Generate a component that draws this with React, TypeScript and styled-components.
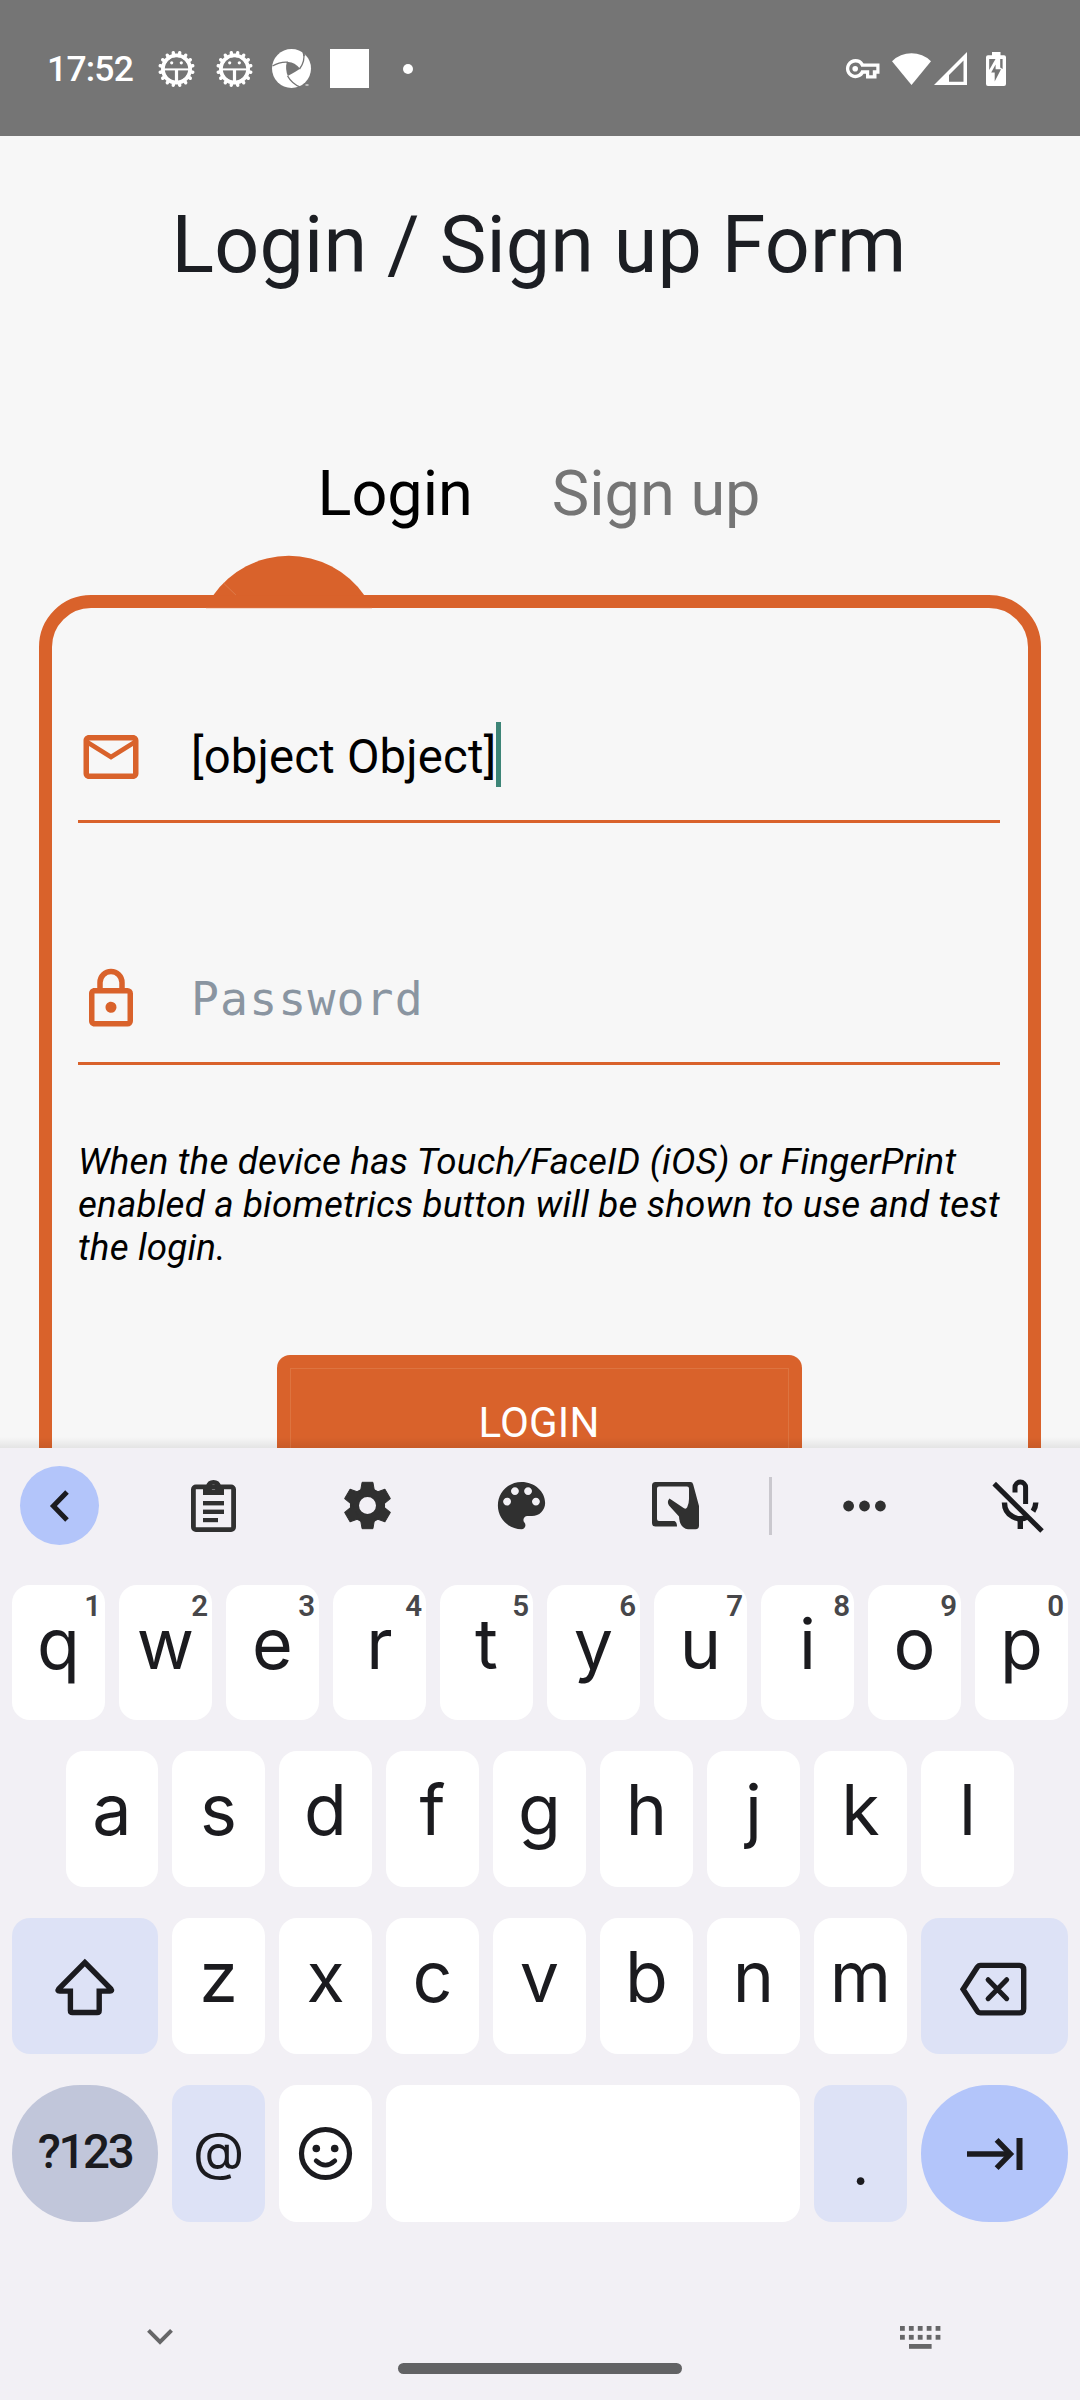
import React from 'react';
import styled, { createGlobalStyle } from 'styled-components';

const ORANGE = '#d9622b';
const INK = '#1b1b1f';

const GlobalStyle = createGlobalStyle`
  * { box-sizing: border-box; }
  body { margin: 0; background: #f7f7f7; font-family: Roboto, sans-serif; }
  button { border: 0; padding: 0; font: inherit; background: none; }
  svg { display: block; flex: none; overflow: visible; }
`;

const Screen = styled.div`
  width: 1080px;
  height: 2400px;
  display: flex;
  flex-direction: column;
  overflow: hidden;
  background: #f7f7f7;
`;

/* ---------- status bar ---------- */

const StatusBar = styled.header`
  height: 136px;
  flex: none;
  display: flex;
  align-items: center;
  justify-content: space-between;
  padding: 1px 74px 0 47px;
  background: #757575;
  color: #fff;
`;

const StatusGroup = styled.div`
  display: flex;
  align-items: center;
`;

const Clock = styled.span`
  width: 111px;
  font: 500 35.5px/40px Roboto, sans-serif;
  letter-spacing: -0.8px;
  white-space: nowrap;
`;

const StatusIcon = styled.svg<{ $gap?: number }>`
  margin-left: ${(p) => p.$gap ?? 0}px;
`;

const AppSquare = styled.div`
  width: 39px;
  height: 39px;
  margin-left: 19px;
  background: #fff;
`;

const MoreDot = styled.div`
  width: 10px;
  height: 10px;
  margin-left: 34px;
  border-radius: 50%;
  background: #fff;
`;

/* ---------- form page ---------- */

const Page = styled.main`
  position: relative;
  height: 1312px;
  flex: none;
  overflow: hidden;
`;

const Title = styled.h1`
  margin: 0 2px 0 0;
  height: 218px;
  line-height: 218px;
  font-size: 79px;
  font-weight: 400;
  letter-spacing: 0.15px;
  text-align: center;
  color: #1c1e23;
`;

const Tabs = styled.nav`
  display: flex;
  justify-content: center;
  gap: 79px;
  height: 80px;
  padding-right: 2px;
  margin-top: 100px;
  margin-bottom: 22px;
`;

const Tab = styled.button<{ $active?: boolean }>`
  font-size: 63px;
  line-height: 80px;
  color: ${(p) => (p.$active ? '#000' : '#757575')};
`;

const Marker = styled.svg`
  margin-left: 197px;
`;

const Card = styled.section`
  width: 1002px;
  height: 1000px;
  margin: 0 auto;
  padding: 86px 28px 0 26px;
  border: 13px solid ${ORANGE};
  border-radius: 52px;
`;

const Field = styled.div`
  display: flex;
  align-items: center;
  height: 129px;
  margin-bottom: 113px;
  border-bottom: 3px solid ${ORANGE};
`;

const FieldValue = styled.span`
  margin-left: 47px;
  font-size: 47.25px;
  line-height: 56px;
  letter-spacing: 0.2px;
  color: #000;
`;

const Placeholder = styled(FieldValue)`
  font-family: 'DejaVu Sans Mono', monospace;
  font-size: 46.5px;
  letter-spacing: 1.1px;
  color: #8a95a1;
`;

const Caret = styled.span`
  width: 5px;
  height: 65px;
  margin: 0 0 5px 0;
  background: #3d8577;
`;

const Note = styled.p`
  margin: -38px -10px 86px 0;
  font-size: 36.75px;
  line-height: 43px;
  letter-spacing: 0.18px;
  font-style: italic;
  color: #000;
`;

const LoginButton = styled.button`
  display: block;
  width: 525px;
  height: 134px;
  margin: 0 auto;
  padding: 13px;
  border-radius: 13px;
  background: ${ORANGE};
`;

const LoginLabel = styled.span`
  display: block;
  height: 108px;
  border: 1px solid #dd7440;
  font-size: 42px;
  line-height: 108px;
  letter-spacing: 0.2px;
  text-align: center;
  color: #fff;
`;

const PageShade = styled.div`
  position: absolute;
  left: 0;
  right: 0;
  bottom: 0;
  height: 11px;
  background: linear-gradient(rgba(0, 0, 0, 0), rgba(0, 0, 0, 0.08));
`;

/* ---------- keyboard ---------- */

const Keyboard = styled.section`
  flex: 1;
  display: flex;
  flex-direction: column;
  background: #f2f0f5;
`;

const Toolbar = styled.div`
  display: flex;
  align-items: center;
  height: 115px;
  padding-left: 20px;
`;

const BackCircle = styled.button`
  width: 79px;
  height: 79px;
  display: grid;
  place-items: center;
  border-radius: 50%;
  background: #b3c5fa;
`;

const ToolSlot = styled.div<{ $width: number }>`
  width: ${(p) => p.$width}px;
  display: flex;
  justify-content: center;
`;

const ToolDivider = styled.div`
  width: 3px;
  height: 58px;
  background: #cac8ce;
`;

const KeyRows = styled.div`
  display: flex;
  flex-direction: column;
  gap: 31px;
  margin-top: 22px;
`;

const KeyRow = styled.div<{ $height: number; $inset?: number }>`
  display: flex;
  gap: 14px;
  height: ${(p) => p.$height}px;
  padding: 0 ${(p) => p.$inset ?? 12}px;
`;

const tones = { plain: '#fff', soft: '#dde2f6', strong: '#b3c5fa', mute: '#c1c6da' };

const Key = styled.button<{ $tone?: keyof typeof tones; $width?: number; $round?: boolean }>`
  position: relative;
  display: flex;
  align-items: center;
  justify-content: center;
  width: ${(p) => p.$width ?? 93}px;
  height: 100%;
  flex: none;
  border-radius: ${(p) => (p.$round ? 68 : 18)}px;
  background: ${(p) => tones[p.$tone ?? 'plain']};
  color: ${INK};
`;

const Letter = styled.span`
  align-self: flex-start;
  font: 400 70px/117px Inter, sans-serif;
`;

const Hint = styled.span`
  position: absolute;
  top: 5px;
  right: 4px;
  font: 600 29.5px/32px Roboto, sans-serif;
  color: #47474a;
`;

const SymbolsLabel = styled.span`
  font: 500 47.5px/60px Roboto, sans-serif;
  letter-spacing: -2.4px;
  margin-top: -4px;
`;

const AtLabel = styled.span`
  font: 400 53px/60px Inter, sans-serif;
  margin-top: -5px;
`;

const PeriodLabel = styled.span`
  font: 400 58px/60px Inter, sans-serif;
  margin-top: 20px;
`;

const NavBar = styled.footer`
  position: relative;
  flex: 1;
  display: flex;
  align-items: center;
  justify-content: space-between;
  padding: 52px 139px 0 147px;
`;

const HomePill = styled.div`
  position: absolute;
  left: 398px;
  bottom: 26px;
  width: 284px;
  height: 11px;
  border-radius: 6px;
  background: #626264;
`;

/* ---------- drawings ---------- */

const teeth = Array.from({ length: 16 }, (_, i) => i * 22.5);

const GearFace = ({ gap }: { gap?: number }) => (
  <StatusIcon $gap={gap} width="37" height="38" viewBox="-18.5 -19 37 38">
    <g stroke="#fff" strokeWidth="3.4" strokeLinecap="round">
      {teeth.map((a) => (
        <line key={a} x1="0" y1="-13.5" x2="0" y2="-16.6" transform={`rotate(${a + 11.25})`} />
      ))}
    </g>
    <circle r="13.6" fill="none" stroke="#fff" strokeWidth="3.8" />
    <path d="M-13 0.4H13" stroke="#fff" strokeWidth="2" />
    <path d="M0 0V14" stroke="#fff" strokeWidth="3.2" />
    <circle cx="-4.8" cy="-6.2" r="1.6" fill="#fff" />
    <circle cx="4.8" cy="-6.2" r="1.6" fill="#fff" />
  </StatusIcon>
);

const Swirl = () => (
  <StatusIcon $gap={19} width="39" height="39" viewBox="0 0 39 39">
    <circle cx="19.5" cy="19.5" r="19.5" fill="#fff" />
    <path d="M14.8 13Q22 12 28 19.7Q22.5 23.5 15.8 27Q13 20 14.8 13Z" fill="#757575" />
    <g fill="none" stroke="#757575" strokeWidth="1.4">
      <path d="M16 13.2Q8 12.5 0.5 17" />
      <path d="M27.5 20Q33.5 12 31.5 3" />
      <path d="M15.6 27Q20 35 29 38.5" />
    </g>
    <path d="M30 2L33.5 6.5L31.5 7Z" fill="#757575" />
    <path d="M26 39L31 37L37 34V39Z" fill="#757575" />
    <path d="M33.5 36H36.5" stroke="#fff" />
  </StatusIcon>
);

const VpnKey = () => (
  <StatusIcon width="34" height="20" viewBox="0 0 34 20">
    <path
      fillRule="evenodd"
      fill="#fff"
      d="M9.5 0A9.6 9.6 0 0 1 17.6 4.4H33.5V14.8H30.5V19.5H20V14.8H17.6A9.6 9.6 0 1 1 9.5 0ZM9.5 3.6A6.1 6.1 0 1 0 15.2 11.3H23.2V16.2H26.8V11.3H30.3V7.8H15.2A6.1 6.1 0 0 0 9.5 3.6Z"
    />
    <circle cx="9.2" cy="9.7" r="2.8" fill="#fff" />
  </StatusIcon>
);

const Wifi = () => (
  <StatusIcon $gap={12} width="39" height="33" viewBox="0 0 39 33">
    <path d="M0 9.2A28 28 0 0 1 39 9.2L19.5 33Z" fill="#fff" />
  </StatusIcon>
);

const Signal = () => (
  <StatusIcon $gap={3} width="33" height="33" viewBox="0 0 33 33">
    <path fillRule="evenodd" fill="#fff" d="M33 0V33H0ZM29.5 8.5L15 23V29.8H29.5Z" />
  </StatusIcon>
);

const Battery = () => (
  <StatusIcon $gap={19} width="20" height="34" viewBox="0 0 20 34">
    <path d="M6 0H14.5V3.2H18A2 2 0 0 1 20 5.2V32A2 2 0 0 1 18 34H2A2 2 0 0 1 0 32V5.2A2 2 0 0 1 2 3.2H6Z" fill="#fff" />
    <path d="M3.2 7H9.5L3.2 18Z" fill="#757575" />
    <path d="M14.2 7H16.6V17L14.2 15.5Z" fill="#757575" />
    <path d="M9.6 12.5V17.2H15L8.7 29.5V20.5H5.2Z" fill="#757575" />
  </StatusIcon>
);

const FieldIcon = ({ d }: { d: string }) => (
  <svg width="66" height="66" viewBox="0 0 24 24" fill={ORANGE}>
    <path d={d} />
  </svg>
);

const MAIL =
  'M22 6C22 4.9 21.1 4 20 4H4C2.9 4 2 4.9 2 6V18C2 19.1 2.9 20 4 20H20C21.1 20 22 19.1 22 18V6M20 6L12 11L4 6H20M20 18H4V8L12 13L20 8V18Z';
const LOCK =
  'M12,17C10.89,17 10,16.1 10,15C10,13.89 10.89,13 12,13A2,2 0 0,1 14,15A2,2 0 0,1 12,17M18,20V10H6V20H18M18,8A2,2 0 0,1 20,10V20A2,2 0 0,1 18,22H6C4.89,22 4,21.1 4,20V10C4,8.89 4.89,8 6,8H7V6A5,5 0 0,1 12,1A5,5 0 0,1 17,6V8H18M12,3A3,3 0 0,0 9,6V8H15V6A3,3 0 0,0 12,3Z';

const TOOL_INK = '#303030';

const Clipboard = () => (
  <svg width="45" height="53" viewBox="0 0 45 53" fill={TOOL_INK}>
    <rect x="2.4" y="7.9" width="40.2" height="42.7" rx="2.5" fill="none" stroke={TOOL_INK} strokeWidth="4.8" />
    <path
      fillRule="evenodd"
      d="M12 7H14.9A7.8 7.8 0 0 1 30.1 7H33V16H12ZM22.5 5.4A2.6 2.6 0 1 0 22.5 10.6A2.6 2.6 0 1 0 22.5 5.4Z"
    />
    <rect x="12" y="22" width="21" height="4.4" />
    <rect x="12" y="30.6" width="21" height="4.4" />
    <rect x="12" y="39" width="15" height="4.2" />
  </svg>
);

const cogTeeth = [0, 60, 120];

const Cog = () => (
  <svg width="47" height="47" viewBox="-23.5 -23.5 47 47">
    <path
      fillRule="evenodd"
      fill={TOOL_INK}
      d="M0 -17.6A17.6 17.6 0 1 1 0 17.6A17.6 17.6 0 1 1 0 -17.6ZM0 -8.5A8.5 8.5 0 1 0 0 8.5A8.5 8.5 0 1 0 0 -8.5Z"
    />
    <g fill={TOOL_INK} stroke={TOOL_INK} strokeWidth="1" strokeLinejoin="round">
      {cogTeeth.map((a) => (
        <path
          key={a}
          transform={`rotate(${a})`}
          d="M-5.4 -23.2H5.4L7.2 -13H-7.2ZM-5.4 23.2H5.4L7.2 13H-7.2Z"
        />
      ))}
    </g>
  </svg>
);

const Palette = () => (
  <svg width="63" height="63" viewBox="0 0 24 24" fill={TOOL_INK}>
    <path d="M12 3c-4.97 0-9 4.03-9 9s4.03 9 9 9c.83 0 1.5-.67 1.5-1.5 0-.39-.15-.74-.39-1.01-.23-.26-.38-.61-.38-.99 0-.83.67-1.5 1.5-1.5H16c2.76 0 5-2.24 5-5 0-4.42-4.03-8-9-8zm-5.5 9c-.83 0-1.5-.67-1.5-1.5S5.67 9 6.5 9 8 9.67 8 10.5 7.33 12 6.5 12zm3-4C8.67 8 8 7.33 8 6.5S8.67 5 9.5 5s1.5.67 1.5 1.5S10.33 8 9.5 8zm5 0c-.83 0-1.5-.67-1.5-1.5S13.67 5 14.5 5s1.5.67 1.5 1.5S15.33 8 14.5 8zm3 4c-.83 0-1.5-.67-1.5-1.5S16.67 9 17.5 9s1.5.67 1.5 1.5-.67 1.5-1.5 1.5z" />
  </svg>
);

const HandTablet = () => (
  <svg width="47" height="47" viewBox="0 0 47 47">
    <path
      fill={TOOL_INK}
      fillRule="evenodd"
      d="M3.5 0H38.5Q40.6 0 41.2 2.4L47 24V43.5Q47 47.3 43.5 47.3H36Q27.5 46 27 34.5L17 23.5Q14.5 19.5 17.5 16.6L32 26.3Q34 27.6 35.2 25.3Q37 21.5 37 17V6.5Q37 4.5 35 4.5H7Q5 4.5 5 6.5V37Q5 39 7 39H22.5Q25 40 25 44.5H3.5Q0 44.5 0 41V3.5Q0 0 3.5 0Z"
    />
  </svg>
);

const MoreDots = () => (
  <svg width="43" height="12" viewBox="0 0 43 12" fill={TOOL_INK}>
    <circle cx="5.6" cy="6" r="5.4" />
    <circle cx="21.5" cy="6" r="5.4" />
    <circle cx="37.4" cy="6" r="5.4" />
  </svg>
);

const MicOff = () => (
  <svg width="53" height="55" viewBox="0 0 53 55" fill="none" stroke={INK} strokeWidth="5.4">
    <path d="M2.2 5.6L50 53" strokeWidth="5" />
    <path d="M23 14.5V9.4A5.3 5.3 0 0 1 33.6 9.4V26" strokeWidth="5" />
    <path d="M12.5 24.5A15.8 15.8 0 0 0 37 38" />
    <path d="M43.8 24.5Q43.6 29.5 41 33.2" />
    <path d="M28.3 40V51" />
  </svg>
);

const ShiftArrow = () => (
  <svg width="60" height="57" viewBox="0 -0.5 60 57" fill="none" stroke={INK} strokeWidth="5.4">
    <path d="M29.8 4L56 30.6Q57.5 32.6 55 32.6H44.2V52Q44.2 54 42.2 54H17.4Q15.4 54 15.4 52V32.6H4.6Q2 32.6 3.6 30.6Z" />
  </svg>
);

const Backspace = () => (
  <svg width="67" height="53" viewBox="1.5 -2.7 67 53" fill="none" stroke={INK} strokeWidth="5.4">
    <path d="M3.6 26.5L17.6 4.8Q18.9 2.7 21 2.7H60Q64.2 2.7 64.2 6.9V46Q64.2 50.2 60 50.2H21Q18.9 50.2 17.6 48.2Z" />
    <path d="M28.6 17L47.2 36M47.2 17L28.6 36" strokeLinecap="round" strokeWidth="5" />
  </svg>
);

const Smiley = () => (
  <svg width="54" height="54" viewBox="0.5 0.5 54 54" fill={INK}>
    <circle cx="27" cy="27" r="24" fill="none" stroke={INK} strokeWidth="5.2" />
    <circle cx="17.8" cy="22" r="3.8" />
    <circle cx="36.2" cy="22" r="3.8" />
    <path d="M17.6 34.2Q27 43 36.4 34.2" fill="none" stroke={INK} strokeWidth="4.6" strokeLinecap="round" />
  </svg>
);

const TabArrow = () => (
  <svg width="56" height="32" viewBox="0 0 56 32" fill="none" stroke={INK} strokeWidth="5.4">
    <path d="M0 16H43" />
    <path d="M29.6 1.8L43.4 16L29.6 30.2" />
    <path d="M52.5 0V32" strokeWidth="6" />
  </svg>
);

const NavKeyboard = () => (
  <svg width="41" height="23" viewBox="0 0 41 23" fill="#666668">
    {[0, 1, 2, 3, 4].map((i) => (
      <g key={i}>
        <rect x={i * 8.9} y="0" width="4.8" height="4.8" />
        <rect x={i * 8.9} y="8.9" width="4.8" height="4.8" />
      </g>
    ))}
    <rect x="9" y="18" width="22.6" height="4.8" />
  </svg>
);

export default function App() {
  return (
    <Screen>
      <GlobalStyle />
      <StatusBar>
        <StatusGroup>
          <Clock>17:52</Clock>
          <GearFace />
          <GearFace gap={21} />
          <Swirl />
          <AppSquare />
          <MoreDot />
        </StatusGroup>
        <StatusGroup>
          <VpnKey />
          <Wifi />
          <Signal />
          <Battery />
        </StatusGroup>
      </StatusBar>

      <Page>
        <Title>Login / Sign up Form</Title>
        <Tabs>
          <Tab $active>Login</Tab>
          <Tab>Sign up</Tab>
        </Tabs>
        <Marker width="184" height="39" viewBox="0 0 184 39">
          <path d="M16.3 39.3A92 92 0 0 1 167.3 39.3Z" fill={ORANGE} />
          <path d="M26.8 27.4L38.9 39" stroke="#e08557" strokeWidth="0.7" />
          <path d="M9 52.4H175" stroke="#f3cdba" strokeWidth="0.8" />
        </Marker>
        <Card>
          <Field>
            <FieldIcon d={MAIL} />
            <FieldValue>[object Object]</FieldValue>
            <Caret />
          </Field>
          <Field>
            <FieldIcon d={LOCK} />
            <Placeholder>Password</Placeholder>
          </Field>
          <Note>
            When the device has Touch/FaceID (iOS) or FingerPrint
            <br />
            enabled a biometrics button will be shown to use and test
            <br />
            the login.
          </Note>
          <LoginButton>
            <LoginLabel>LOGIN</LoginLabel>
          </LoginButton>
        </Card>
        <PageShade />
      </Page>

      <Keyboard>
        <Toolbar>
          <BackCircle>
            <svg width="20" height="32" viewBox="0 0 20 32" fill="none" stroke={INK} strokeWidth="5">
              <path d="M17 2L3.4 16L17 30" />
            </svg>
          </BackCircle>
          <ToolSlot $width={229}>
            <Clipboard />
          </ToolSlot>
          <ToolSlot $width={79}>
            <Cog />
          </ToolSlot>
          <ToolSlot $width={229}>
            <Palette />
          </ToolSlot>
          <ToolSlot $width={79}>
            <HandTablet />
          </ToolSlot>
          <ToolSlot $width={54} />
          <ToolDivider />
          <ToolSlot $width={185}>
            <MoreDots />
          </ToolSlot>
          <ToolSlot $width={123}>
            <MicOff />
          </ToolSlot>
        </Toolbar>

        <KeyRows>
          <KeyRow $height={135}>
            {'qwertyuiop'.split('').map((c, i) => (
              <Key key={c}>
                <Letter>{c}</Letter>
                <Hint>{(i + 1) % 10}</Hint>
              </Key>
            ))}
          </KeyRow>
          <KeyRow $height={136} $inset={66}>
            {'asdfghjkl'.split('').map((c) => (
              <Key key={c} $width={c === 'a' ? 92 : 93}>
                <Letter>{c}</Letter>
              </Key>
            ))}
          </KeyRow>
          <KeyRow $height={136}>
            <Key $tone="soft" $width={146}>
              <ShiftArrow />
            </Key>
            {'zxcvbnm'.split('').map((c) => (
              <Key key={c}>
                <Letter>{c}</Letter>
              </Key>
            ))}
            <Key $tone="soft" $width={147}>
              <Backspace />
            </Key>
          </KeyRow>
          <KeyRow $height={137}>
            <Key $tone="mute" $width={146} $round>
              <SymbolsLabel>?123</SymbolsLabel>
            </Key>
            <Key $tone="soft">
              <AtLabel>@</AtLabel>
            </Key>
            <Key>
              <Smiley />
            </Key>
            <Key $width={414} aria-label="space" />
            <Key $tone="soft">
              <PeriodLabel>.</PeriodLabel>
            </Key>
            <Key $tone="strong" $width={147} $round>
              <TabArrow />
            </Key>
          </KeyRow>
        </KeyRows>

        <NavBar>
          <svg width="26" height="16" viewBox="0 0 26 16" fill="none" stroke="#666668" strokeWidth="4">
            <path d="M1.5 1.4L13 13L24.5 1.4" />
          </svg>
          <NavKeyboard />
          <HomePill />
        </NavBar>
      </Keyboard>
    </Screen>
  );
}
